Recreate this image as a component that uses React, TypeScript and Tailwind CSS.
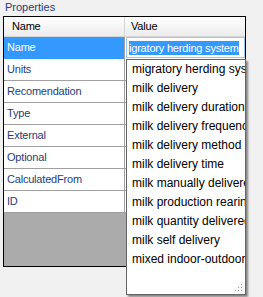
import React from "react";

const rows = ["Name", "Units", "Recomendation", "Type", "External", "Optional", "CalculatedFrom", "ID"];
const items = [
  "migratory herding system",
  "milk delivery",
  "milk delivery duration",
  "milk delivery frequency",
  "milk delivery method",
  "milk delivery time",
  "milk manually delivered",
  "milk production rearing",
  "milk quantity delivered",
  "milk self delivery",
  "mixed indoor-outdoor",
];

export default function App() {
  return (
    <div
      className="relative w-[263px] h-[297px] overflow-hidden bg-[#f0f0f0]"
      style={{ fontFamily: '"Liberation Sans", Arial, sans-serif' }}
    >
      <div className="h-[16px] pl-[5px] pt-[1px] text-[11px] leading-[13px] text-[#1e3d7b]">Properties</div>
      <div className="ml-[3px] w-[243px] h-[251px] border border-black flex flex-col text-[11px] tracking-[-0.2px]">
        <div className="h-[20px] flex shrink-0 border-b border-[#d5d5d5] bg-gradient-to-b from-white to-[#ececec] text-black leading-[19px]">
          <div className="w-[121px] pl-[8px] border-r border-[#d5d5d5]">Name</div>
          <div className="flex-1 pl-[6px]">Value</div>
        </div>
        {rows.map((r, i) => (
          <div key={r} className="h-[22px] flex shrink-0 leading-[21px]">
            <div
              className={
                i === 0
                  ? "w-[121px] pl-[3px] bg-[#3399ff] text-white border-r border-[#a0a0a0]"
                  : "w-[121px] pl-[3px] bg-white text-[#1e3d7b] border-b border-r border-[#a0a0a0]"
              }
            >
              {r}
            </div>
            <div className={i === 0 ? "flex-1 bg-white" : "flex-1 bg-white border-b border-[#a0a0a0]"}>
              {i === 0 && (
                <div className="ml-[1px] h-[21px] border border-[#99c9ef] bg-white flex items-center pl-[2px] overflow-hidden">
                  <span className="bg-[#3399ff] text-white leading-[14px] whitespace-nowrap">igratory herding system</span>
                </div>
              )}
            </div>
          </div>
        ))}
        <div className="flex-1 bg-[#ababab]" />
      </div>
      <div className="absolute left-[126px] top-[59px] w-[120px] h-[236px] border border-[#646464] bg-white shadow-[2px_2px_2px_rgba(0,0,0,0.45)] overflow-hidden">
        {items.map((t) => (
          <div key={t} className="h-[19px] pl-[5px] text-[12px] leading-[19px] text-black whitespace-nowrap">
            {t}
          </div>
        ))}
        <svg className="absolute right-[1px] bottom-[1px]" width="12" height="12" viewBox="0 0 12 12">
          <polygon points="12,0 12,12 0,12" fill="#f4f4f4" />
          {[
            [9, 9],
            [9, 6],
            [6, 9],
            [9, 3],
            [6, 6],
            [3, 9],
          ].map(([x, y]) => (
            <g key={`${x}-${y}`}>
              <rect x={x + 1} y={y + 1} width="1" height="1" fill="#ffffff" />
              <rect x={x} y={y} width="1" height="1" fill="#a0a0a0" />
            </g>
          ))}
        </svg>
      </div>
    </div>
  );
}
